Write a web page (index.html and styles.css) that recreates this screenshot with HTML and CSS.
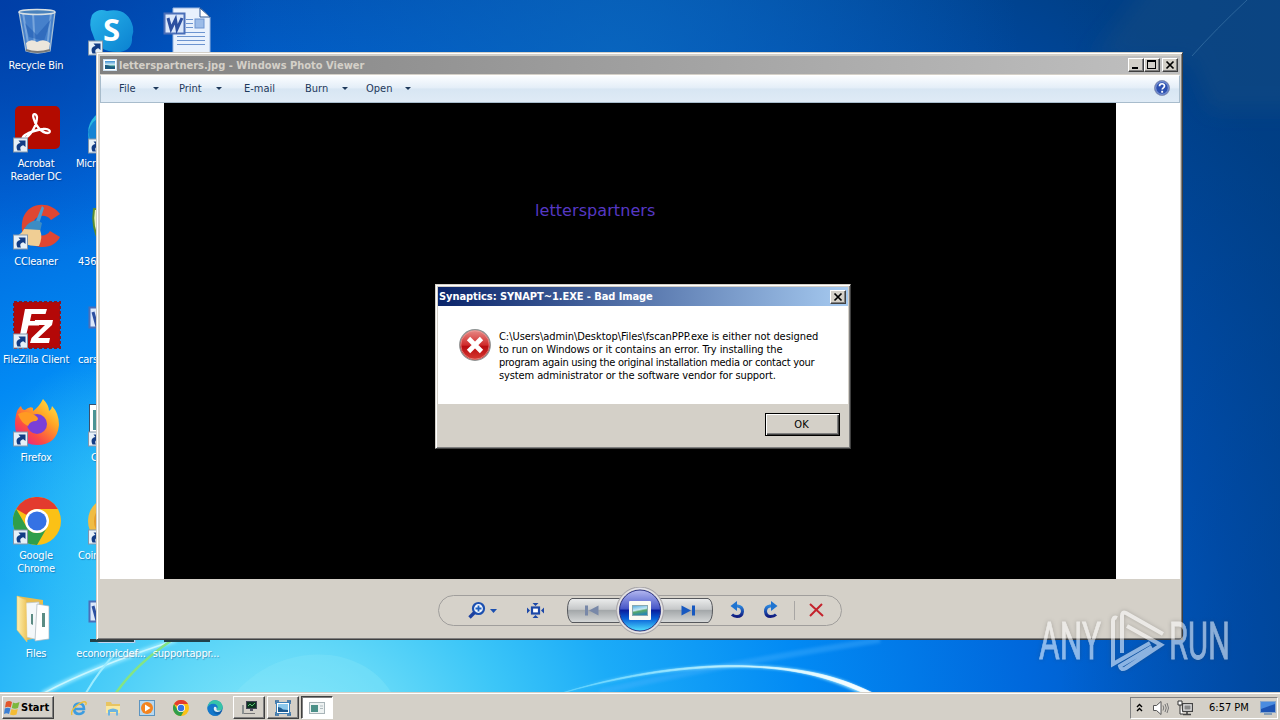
FILE: index.html
```html
<!DOCTYPE html>
<html>
    <head>
        <meta charset="UTF-8">
        <title>Desktop</title>
        <link rel="stylesheet" href="styles.css">
    </head>
    <body>
        <!-- shared icons -->
        <svg class="defs" width="0" height="0">
            <defs>
                <linearGradient id="gSky" x1="0" y1="0" x2="1" y2="1">
                    <stop offset="0" stop-color="#28b4ea"/><stop offset="1" stop-color="#0a80d0"/>
                </linearGradient>
                <linearGradient id="gFox" x1="1" y1="0" x2="0.2" y2="1">
                    <stop offset="0" stop-color="#fff04a"/><stop offset="0.4" stop-color="#ffa526"/><stop offset="0.75" stop-color="#fb4a45"/><stop offset="1" stop-color="#e5228c"/>
                </linearGradient>
                <linearGradient id="gFolder" x1="0" y1="0" x2="1" y2="0">
                    <stop offset="0" stop-color="#fdf0b0"/><stop offset="1" stop-color="#eec55c"/>
                </linearGradient>
                <linearGradient id="gEdge" x1="0" y1="0" x2="1" y2="1">
                    <stop offset="0" stop-color="#1598d8"/><stop offset="1" stop-color="#0c4da0"/>
                </linearGradient>
                <linearGradient id="gPic" x1="0" y1="0" x2="0" y2="1">
                    <stop offset="0" stop-color="#3e8fd0"/><stop offset="0.5" stop-color="#d8f0f8"/><stop offset="0.6" stop-color="#3c9888"/><stop offset="1" stop-color="#1870a0"/>
                </linearGradient>
            </defs>
            <symbol id="arrow" viewBox="0 0 15 15">
                <rect x="0.5" y="0.5" width="14" height="14" fill="#e6f0f8" stroke="#8296ac"/>
                <path d="M4.5 13 C2.5 8.5 4 6 7.5 5.5 L5.5 3 H12.5 V9.5 L10.3 7.8 C7.5 8.5 6.5 10 8 13 Z" fill="#123c84"/>
            </symbol>
            <symbol id="word" viewBox="0 0 48 48">
                <path d="M10 1 H37 L47 10 V48 H10 Z" fill="#e8f1fd" stroke="#9ab6de"/>
                <path d="M37 1 V10 H47 Z" fill="#fff" stroke="#2c5490"/>
                <path d="M23 12.500 H30 M23 16.500 H30 M23 20.500 H30 M14 25.500 H42 M14 29.500 H42 M14 33.500 H42 M14 37.500 H42" stroke="#6c94d0"/>
                <rect x="32" y="12" width="9" height="9" fill="#9cbce8" stroke="#6c94d0"/>
                <rect x="1.500" y="6.500" width="20" height="20" fill="#dbe7fa" stroke="#4a6fb8" stroke-width="2"/>
                <path d="M5 11 L8 22 L12.500 12.500 L14 22 L19 11" fill="none" stroke="#2c4fa0" stroke-width="3"/>
            </symbol>
            <symbol id="chrome" viewBox="0 0 48 48">
                <circle cx="24" cy="24" r="24" fill="#fbc116"/>
                <path d="M3.2 12 A24 24 0 0 1 44.800 12 H24 A12 12 0 0 0 13.600 18 Z" fill="#e33b2e"/>
                <path d="M3.200 12 A24 24 0 0 0 24 48 L34.400 30 A12 12 0 0 1 13.600 30 Z" fill="#2f9e4b"/>
                <circle cx="24" cy="24" r="12" fill="#fff"/>
                <circle cx="24" cy="24" r="9.600" fill="#3572e4"/>
            </symbol>
            <symbol id="edge" viewBox="0 0 24 24">
                <circle cx="12" cy="12" r="11.500" fill="url(#gEdge)"/>
                <path d="M1 11 C2 3 8 0.500 12 0.500 C19 0.500 24 6 23.500 12 C23 16 17 17 14.500 15 C16 12 14 8 9.500 8 C5 8 2 9.500 1 11Z" fill="#36c4a8"/>
                <path d="M1 11 C2 8 5 5.500 9.500 5.500 C14 5.500 17 9 16 13 C15 11 13.500 9.500 11 10 C7 11 7 18 13 21 C16 22.500 19 21.500 21 19.500 C17 25.500 7 25 3 19 C1.500 17 .5 14 1 11Z" fill="#1478cc"/>
                <path d="M11 10.500 C13 9.500 15 11 14.500 14.500 C15.500 16 19 16.500 22 15 C19 19 12 19 10.500 15 C10 13 10 11.500 11 10.500Z" fill="#e4f0f6"/>
            </symbol>
            <symbol id="photo" viewBox="0 0 14 12">
                <rect x="0.500" y="0.500" width="13" height="11" fill="#fff" stroke="#cfe0ee"/>
                <rect x="2" y="2" width="10" height="8" fill="url(#gPic)"/>
                <path d="M2 10 V6 C5 5.500 7 8 12 7.500 V10Z" fill="#1d5a80"/>
            </symbol>
        </svg>

        <main class="desktop">
            <svg class="wallpaper" width="1280" height="692" viewBox="0 0 1280 692">
                <defs>
                    <radialGradient id="sky" gradientUnits="userSpaceOnUse" cx="0" cy="0" r="1" gradientTransform="translate(280 740) scale(1250 975)">
                        <stop offset="0" stop-color="#8aeafa"/><stop offset="0.100" stop-color="#62d8f8"/>
                        <stop offset="0.180" stop-color="#3cc6f8"/><stop offset="0.270" stop-color="#1cacf8"/>
                        <stop offset="0.420" stop-color="#028af4"/><stop offset="0.600" stop-color="#0068dc"/>
                        <stop offset="0.780" stop-color="#0050b4"/><stop offset="1" stop-color="#004088"/>
                    </radialGradient>
                    <radialGradient id="glow" gradientUnits="userSpaceOnUse" cx="620" cy="60" r="400">
                        <stop offset="0" stop-color="#0c6cc0" stop-opacity="0.700"/><stop offset="1" stop-color="#0c6cc0" stop-opacity="0"/>
                    </radialGradient>
                    <radialGradient id="corner" gradientUnits="userSpaceOnUse" cx="0" cy="0" r="260">
                        <stop offset="0" stop-color="#003aa4" stop-opacity="0.800"/><stop offset="1" stop-color="#003aa4" stop-opacity="0"/>
                    </radialGradient>
                    <radialGradient id="cyan" gradientUnits="userSpaceOnUse" cx="130" cy="500" r="150">
                        <stop offset="0" stop-color="#3cd0f8" stop-opacity="0.700"/><stop offset="1" stop-color="#3cd0f8" stop-opacity="0"/>
                    </radialGradient>
                    <linearGradient id="night" gradientUnits="userSpaceOnUse" x1="1060" y1="0" x2="1280" y2="0">
                        <stop offset="0" stop-color="#003c80" stop-opacity="0"/><stop offset="1" stop-color="#003c80" stop-opacity="0.400"/>
                    </linearGradient>
                    <linearGradient id="arc" x1="0" x2="1">
                        <stop offset="0" stop-color="#5cd2ff"/><stop offset="0.600" stop-color="#c8f4ff"/><stop offset="1" stop-color="#fff"/>
                    </linearGradient>
                    <filter id="soft" x="-20%" y="-20%" width="140%" height="140%"><feGaussianBlur stdDeviation="1.600"/></filter>
                    <filter id="wide" x="-50%" y="-50%" width="200%" height="200%"><feGaussianBlur stdDeviation="10"/></filter>
                </defs>
                <rect width="1280" height="692" fill="url(#sky)"/>
                <rect width="1280" height="692" fill="url(#glow)"/>
                <rect width="1280" height="692" fill="url(#corner)"/>
                <rect width="1280" height="692" fill="url(#cyan)"/>
                <rect width="1280" height="692" fill="url(#night)"/>
                <path d="M1180 -60 L1090 60 H1190 L1210 110 H1340 V-60Z" fill="#1a5080" opacity="0.400" filter="url(#wide)"/>
                <path d="M1247 0 Q1215 30 1192 56" fill="none" stroke="#4c86b4" opacity="0.500"/>
                <path d="M236 692 C280 642 360 642 391 692 Z" fill="#8ce8f8" opacity="0.300"/>
                <path d="M42 694 Q90 668 176 640" fill="none" stroke="#8ce6ff" stroke-width="5" filter="url(#soft)"/>
                <path d="M44 693 Q90 668 176 640" fill="none" stroke="#c8f6ff" stroke-width="1.500"/>
                <path d="M86 693 Q98 672 118 650" fill="none" stroke="#9cecff" stroke-width="2"/>
                <path d="M116 693 Q135 665 172 640" fill="none" stroke="#84e484" stroke-width="2.500"/>
                <path d="M600 692 Q700 668 880 640" fill="none" stroke="#50b4ff" stroke-width="6" opacity="0.350" filter="url(#soft)"/>
                <path d="M562 693 C640 668 720 662 776 667 C820 671 848 680 872 694 L862 694 C840 684 812 672 776 669 C720 664 640 670 562 693Z" fill="#aeeeff" filter="url(#soft)"/>
                <path d="M562 693 C640 669 710 663 760 666.500 C815 669 846 680 875 694 L866 694 C840 682 810 671 760 667.500 C710 664.500 640 671 562 693Z" fill="url(#arc)" stroke="url(#arc)" stroke-width="0.700"/>
            </svg>

            <div class="icons">
                <div class="icon">
                    <svg viewBox="0 0 48 48">
                        <path d="M6 4 H42 L37 44 Q24 48 13 44 Z" fill="#7fb4e6" opacity="0.550"/>
                        <path d="M10 6 L16 42 M20 6 L22 43 M38 6 L34 42" stroke="#c4def4" stroke-width="2" opacity="0.400"/>
                        <path d="M12 16 L24 28 L38 12 L31 34 L16 30Z" fill="#1c58b0" opacity="0.500"/>
                        <path d="M13 36 Q18 31 24 35 Q31 31 37 36 L36 43 Q24 47 14 43Z" fill="#ece6dc"/>
                        <path d="M6 5 L13 44 Q24 48 37 44 L42 5" fill="none" stroke="#a8c0d4" stroke-width="1.300"/>
                        <ellipse cx="24" cy="5" rx="18" ry="2.500" fill="#4a82bc" stroke="#d8e0e4" stroke-width="1.500"/>
                        <path d="M13 43 Q24 47 37 43" fill="none" stroke="#787878" stroke-width="2"/>
                    </svg>
                    <p>Recycle Bin</p>
                </div>
                <div class="icon">
                    <svg viewBox="0 0 48 48">
                        <rect width="45" height="43" rx="5" x="2" y="1" fill="#b30b00"/>
                        <path d="M12 33 C17 31 24 21 24 12 C23 8 19 8 20.500 13 C22 20 28 28 35 28 C39 27 36 23 30 24 C23 25 17 27 12 30 C8 33 10 36 12 33Z" fill="none" stroke="#fff" stroke-width="2.300"/>
                        <use href="#arrow" x="0" y="32" width="15" height="16"/>
                    </svg>
                    <p>Acrobat<br>Reader DC</p>
                </div>
                <div class="icon">
                    <svg viewBox="0 0 48 48">
                        <path d="M47 11 C38 -2 16 -2 10 15 C5 34 16 44 30 44 C38 44 44 40 47 34 L37 28 C33 35 21 34 20 24 C19 13 32 9 38 17Z" fill="#de4632"/>
                        <path d="M29 3 L31 5 L26 21 L22 20Z" fill="#4b9bd0"/>
                        <path d="M14 22 Q22 14 29 20 L27 29 L11 26Z" fill="#3c8cc4"/>
                        <path d="M11 26 L27 27 Q30 34 26 43 Q12 44 1 34 Q8 32 11 26Z" fill="#f0ce94"/>
                        <use href="#arrow" x="0" y="31" width="15" height="16"/>
                    </svg>
                    <p>CCleaner</p>
                </div>
                <div class="icon">
                    <svg viewBox="0 0 48 48">
                        <rect x="1" y="1" width="46" height="46" fill="#b40808" stroke="#8c1420" stroke-width="2" stroke-dasharray="3 2"/>
                        <path d="M12 8 H34 L32.500 13 H18.500 L17 20 H27 L26 24.500 H15.500 L12 39 H6Z" fill="#fff"/>
                        <path d="M22 19 H40 L39 24 L25 37 H37 L36 42 H17 L18.500 37 L32 24 H21Z" fill="#fff"/>
                        <use href="#arrow" x="0" y="32" width="15" height="16"/>
                    </svg>
                    <p>FileZilla Client</p>
                </div>
                <div class="icon">
                    <svg viewBox="0 0 48 48">
                        <path d="M3 16 Q4 10 8 7 Q9 11 12 11 Q17 7 20 9 L20 12 Q26 8 30 0 Q36 6 36 12 Q39 10 39 7 Q46 14 46 26 Q44 46 24 46 Q2 45 2 25 Q2 20 3 16Z" fill="url(#gFox)"/>
                        <circle cx="24" cy="25" r="10" fill="#7a3fd8"/>
                        <path d="M5 15 Q14 10 23 17 Q27 20 23 22 Q17 22 15 27 Q8 24 5 15Z" fill="#ff9a22"/>
                        <use href="#arrow" x="0" y="32" width="15" height="16"/>
                    </svg>
                    <p>Firefox</p>
                </div>
                <div class="icon">
                    <svg viewBox="0 0 48 48">
                        <use href="#chrome" width="48" height="48"/>
                        <use href="#arrow" x="0" y="32" width="15" height="16"/>
                    </svg>
                    <p>Google<br>Chrome</p>
                </div>
                <div class="icon">
                    <svg viewBox="0 0 48 48">
                        <path d="M4 1 L30 5 V42 L14 45 Z" fill="#e8bd50"/>
                        <path d="M12 8 L26 7 L26 45 L13 42Z" fill="#f4f8fa" stroke="#b8c4cc" stroke-width="0.700"/>
                        <path d="M24 9 L36 11 V44 L22 46Z" fill="#fff" stroke="#a8b4bc" stroke-width="0.700"/>
                        <path d="M18 19 L20 19 V30 L18 29Z M29 18 L32 18 V32 L29 32Z" fill="#5c8c84"/>
                        <path d="M4 1 L13 5 L14 47 L4 35Z" fill="url(#gFolder)" stroke="#e8c468" stroke-width="0.600"/>
                    </svg>
                    <p>Files</p>
                </div>

                <div class="icon">
                    <svg viewBox="0 0 48 48">
                        <path d="M4 8 Q10 1 19 4 Q40 0 45 20 Q46 25 44 30 Q45 43 32 45 Q10 46 5 28 Q0 18 4 8Z" fill="url(#gSky)"/>
                        <text class="skype" x="15" y="34">S</text>
                        <use href="#arrow" x="0" y="33" width="15" height="16"/>
                    </svg>
                    <p></p>
                </div>
                <div class="icon">
                    <svg viewBox="0 0 48 48">
                        <circle cx="24" cy="28" r="24" fill="#2ab8e0"/>
                        <path d="M0 27 Q4 14 14 12 V48 Q2 40 0 27Z" fill="#1684d4"/>
                        <use href="#arrow" x="0" y="33" width="15" height="16"/>
                    </svg>
                    <p>Microsoft Edge</p>
                </div>
                <div class="icon cut">
                    <svg viewBox="0 0 48 48"><path d="M6 6 H40 V40 H12 Q3 24 6 6Z" fill="#e8f4c0" stroke="#5c8c30" stroke-width="2"/></svg>
                    <p>436</p>
                </div>
                <div class="icon cut">
                    <svg viewBox="0 0 48 48"><use href="#word" width="48" height="48"/></svg>
                    <p>cars</p>
                </div>
                <div class="icon cut">
                    <svg viewBox="0 0 48 48">
                        <rect x="1.500" y="5.500" width="44" height="40" fill="#fff" stroke="#3a506c"/>
                        <path d="M5 11 H44 V31 H5Z" fill="#4c9494"/>
                        <use href="#arrow" x="0" y="32" width="15" height="16"/>
                    </svg>
                    <p class="far">C</p>
                </div>
                <div class="icon cut">
                    <svg viewBox="0 0 48 48">
                        <circle cx="24" cy="24" r="24" fill="#f0bc44"/><circle cx="24" cy="24" r="18" fill="#e49c2c"/>
                        <use href="#arrow" x="0" y="32" width="15" height="16"/>
                    </svg>
                    <p>Coin</p>
                </div>
                <div class="icon">
                    <svg viewBox="0 0 48 48"><use href="#word" width="48" height="48"/><rect y="44" x="2" width="44" height="3" fill="#20424c"/></svg>
                    <p>economicdef...</p>
                </div>

                <div class="icon">
                    <svg viewBox="0 0 48 48"><use href="#word" width="48" height="48"/></svg>
                    <p></p>
                </div>
                <div class="icon last">
                    <svg viewBox="0 0 48 48"><rect x="1" y="4" width="46" height="43" fill="#20424c"/></svg>
                    <p>supportappr...</p>
                </div>
            </div>

            <!-- photo viewer -->
            <section class="window viewer">
                <div class="titlebar inactive">
                    <svg class="app" viewBox="0 0 14 12"><use href="#photo"/></svg>
                    <h1>letterspartners.jpg - Windows Photo Viewer</h1>
                    <div class="winbuttons">
                        <button><svg viewBox="0 0 12 10"><path d="M2 7 H8 V9 H2Z"/></svg></button>
                        <button><svg viewBox="0 0 12 10"><path d="M1 0 H10 V9 H1Z M2 2 V8 H9 V2Z" fill-rule="evenodd"/></svg></button>
                        <button class="close"><svg viewBox="0 0 12 10"><path d="M2.500 1.500 L9.500 8.500 M9.500 1.500 L2.500 8.500" stroke="#000" stroke-width="1.700"/></svg></button>
                    </div>
                </div>
                <nav class="menu">
                    <span class="file">File</span><i></i>
                    <span class="print">Print</span><i></i>
                    <span class="email">E-mail</span>
                    <span class="burn">Burn</span><i></i>
                    <span class="open">Open</span><i></i>
                    <svg class="help" viewBox="0 0 16 16">
                        <circle cx="8" cy="8" r="7.500" fill="#2c50b0" stroke="#8a94b4"/>
                        <circle cx="8" cy="8" r="6.300" fill="none" stroke="#a8bce8" stroke-width="0.800"/>
                        <path d="M5.500 6.200 C5.500 3 10.600 3 10.500 6 C10.500 7.800 8.200 7.800 8.200 9.600" fill="none" stroke="#fff" stroke-width="1.700"/>
                        <rect x="7.200" y="10.800" width="1.900" height="1.900" fill="#fff"/>
                    </svg>
                </nav>
                <div class="stage">
                    <div class="picture"><span>letterspartners</span></div>
                </div>
                <div class="controls">
                    <svg width="406" height="48" viewBox="437 587 406 48">
                        <defs>
                            <linearGradient id="steel" x1="0" y1="0" x2="0" y2="1">
                                <stop offset="0" stop-color="#eceded"/><stop offset="0.450" stop-color="#c6c8c9"/><stop offset="0.500" stop-color="#a4a8aa"/><stop offset="1" stop-color="#d6d8d8"/>
                            </linearGradient>
                            <linearGradient id="orb" x1="0" y1="0" x2="0" y2="1">
                                <stop offset="0" stop-color="#b4b8f0"/><stop offset="0.450" stop-color="#4858c8"/><stop offset="0.500" stop-color="#0820a0"/><stop offset="0.700" stop-color="#0860d8"/><stop offset="1" stop-color="#50e0ff"/>
                            </linearGradient>
                            <linearGradient id="blue" x1="0" y1="0" x2="0" y2="1">
                                <stop offset="0" stop-color="#2a84dc"/><stop offset="1" stop-color="#101c80"/>
                            </linearGradient>
                            <linearGradient id="view" x1="0" y1="0" x2="0.3" y2="1">
                                <stop offset="0" stop-color="#4ca8e0"/><stop offset="0.500" stop-color="#c4e8f4"/><stop offset="0.650" stop-color="#58a868"/><stop offset="1" stop-color="#2888b0"/>
                            </linearGradient>
                        </defs>
                        <rect x="438.500" y="595.500" width="403" height="30" rx="15" fill="#d6d2ca" stroke="#a09e9c"/>
                        <path d="M572 598.500 H708 Q712.500 600 712.500 610 Q712.500 620 708 622.500 H572 Q567.500 620 567.500 610 Q567.500 600 572 598.500Z" fill="url(#steel)" stroke="#56585c"/>
                        <circle cx="640" cy="610.500" r="23.500" fill="#d6d2ca" stroke="#a4a2a8"/>
                        <circle cx="640" cy="610.500" r="20.500" fill="url(#orb)" stroke="#2c3484"/>
                        <circle cx="640" cy="610.500" r="22" fill="none" stroke="#e8e8f4"/>
                        <rect x="629" y="601" width="22" height="19" rx="1" fill="#fbfbf4"/>
                        <rect x="632.500" y="605.500" width="15" height="10" fill="url(#view)" stroke="#88a8b0"/>
                        <circle cx="478.500" cy="608.500" r="5.500" fill="#f0f6ff" stroke="#1c50b0" stroke-width="2.200"/>
                        <path d="M474.500 612.500 L469.500 617.500" stroke="#1c40a0" stroke-width="3.400"/>
                        <path d="M475.500 608.500 H481.500 M478.500 605.500 V611.500" stroke="#1c60c0" stroke-width="1.800"/>
                        <path d="M490 609 H497 L493.500 613Z" fill="#1c50b0"/>
                        <rect x="532" y="607.500" width="7" height="6" fill="#fff" stroke="#1c48a8" stroke-width="2.200"/>
                        <path d="M532.500 603 H538.500 L535.500 606Z M532.500 618 H538.500 L535.500 615Z M527 607.500 V613.500 L530 610.500Z M544 607.500 V613.500 L541 610.500Z" fill="#1c48a8"/>
                        <path d="M585 605.500 H588 V615.500 H585Z M598.500 605.500 V615.500 L589 610.500Z" fill="#7888a8"/>
                        <path d="M681.500 605.500 V615.500 L691 610.500Z M692 605.500 H695 V615.500 H692Z" fill="#1658c0"/>
                        <path d="M735 606 H737.500 Q742.500 606.500 742.500 611.500 Q742 616.500 737 616.500 Q734 616.500 732 614.500" fill="none" stroke="url(#blue)" stroke-width="3"/>
                        <path d="M730.500 606 L737 601 V611Z" fill="#1f74d0"/>
                        <path d="M773 606 H770 Q765.500 606.500 765.500 611.500 Q766 616.500 770.500 616.500 Q774 616.500 776 614.500" fill="none" stroke="url(#blue)" stroke-width="3"/>
                        <path d="M777.500 606 L771 601 V611Z" fill="#1f74d0"/>
                        <path d="M794.500 601 V620" stroke="#a8a6a4"/>
                        <path d="M810 604 L823 616 M822 604 L810 616" stroke="#c4222c" stroke-width="2"/>
                    </svg>
                </div>
            </section>

            <!-- error message -->
            <section class="window dialog">
                <div class="titlebar">
                    <h1>Synaptics: SYNAPT~1.EXE - Bad Image</h1>
                    <div class="winbuttons">
                        <button class="close"><svg viewBox="0 0 12 10"><path d="M2.500 1.500 L9.500 8.500 M9.500 1.500 L2.500 8.500" stroke="#000" stroke-width="1.700"/></svg></button>
                    </div>
                </div>
                <div class="message">
                    <svg viewBox="0 0 32 32">
                        <defs>
                            <linearGradient id="red" x1="0" y1="0" x2="0" y2="1">
                                <stop offset="0" stop-color="#e88c88"/><stop offset="0.500" stop-color="#d02c2c"/><stop offset="0.550" stop-color="#b80c10"/><stop offset="1" stop-color="#d83c34"/>
                            </linearGradient>
                        </defs>
                        <circle cx="16" cy="16" r="15.300" fill="url(#red)" stroke="#8e9494" stroke-width="1.200"/>
                        <circle cx="16" cy="16" r="14.200" fill="none" stroke="#eca8a4" stroke-width="0.600"/>
                        <path d="M9.500 9.500 L22.500 22.500 M22.500 9.500 L9.500 22.500" stroke="#fff" stroke-width="4.700"/>
                    </svg>
                    <p>
                        C:\Users\admin\Desktop\Files\fscanPPP.exe is either not designed<br>
                        <span class="tight">to run on Windows or it contains an error. Try installing the</span><br>
                        <span class="tighter">program again using the original installation media or contact your</span><br>
                        <span class="tight">system administrator or the software vendor for support.</span>
                    </p>
                </div>
                <div class="answer">
                    <button>OK</button>
                </div>
            </section>

            <svg class="watermark" width="210" height="76" viewBox="1030 602 210 76">
                <text x="1039" y="659" textLength="62" lengthAdjust="spacingAndGlyphs">ANY</text>
                <text x="1169" y="659" textLength="61" lengthAdjust="spacingAndGlyphs">RUN</text>
                <path d="M1117 618 Q1113 616 1113 622 V664 L1150 643 M1122 653 V616 Q1122 611 1126 613 L1163 634 M1127 626 L1161 645 L1126 668 Q1121 671 1120 666 L1152 647"/>
            </svg>
        </main>

        <footer class="taskbar">
            <button class="start">
                <svg viewBox="0 0 16 16">
                    <path d="M2 2 Q5 0 8 2 L6.800 7.500 Q4 6 1 7.500Z" fill="#e2572c"/>
                    <path d="M9 2.500 Q12 4 15.500 2 L14 8 Q11 9.500 7.800 8Z" fill="#7cb83c"/>
                    <path d="M.8 8.500 Q4 7 6.500 8.500 L5 14 Q2.500 12.500 0 14Z" fill="#3c80d4"/>
                    <path d="M7.500 9 Q10.500 10.500 13.800 9 L12.500 14.500 Q9.500 16 6 14.500Z" fill="#f4bc34"/>
                </svg>
                Start
            </button>
            <div class="quick">
                <svg viewBox="0 0 16 16">
                    <path d="M3 9 H13 Q13 3.500 8 3.500 Q3 3.500 3 9 Q3.500 14 8 14 Q11.500 14 13 11" fill="none" stroke="#3c9ce0" stroke-width="2.600"/>
                    <path d="M1 15 Q-1 11 6 5.500 Q13 0 15 2.500 Q15.500 3.500 14.500 5" fill="none" stroke="#ecc03c" stroke-width="1.400"/>
                </svg>
                <svg viewBox="0 0 16 16">
                    <path d="M1 2 H6 L7 4 H15 V13 H1Z" fill="#e8c460"/><path d="M1 6 H15 V13 H1Z" fill="#fbe8a0"/>
                    <path d="M3 15.500 V10 Q8 7 13 10 V15.500 H11 V12 H5 V15.500Z" fill="#6cb4e0"/>
                </svg>
                <svg viewBox="0 0 16 16">
                    <rect x="0.500" y="0.500" width="15" height="15" fill="#b8d8f0" stroke="#5c94c0"/>
                    <circle cx="8" cy="8" r="6" fill="#f48420"/><path d="M6 4.500 L11.500 8 L6 11.500Z" fill="#fff"/>
                </svg>
                <svg viewBox="0 0 48 48"><use href="#chrome"/></svg>
                <svg viewBox="0 0 24 24"><use href="#edge"/></svg>
            </div>
            <div class="tasks">
                <button>
                    <svg viewBox="0 0 16 16">
                        <rect x="5.500" y="1.500" width="10" height="7" fill="#0c3420" stroke="#445"/><path d="M7 6 L9 4 L11 6 L14 3" fill="none" stroke="#58c070"/>
                        <path d="M9 9 H12 V11 H9Z" fill="#556"/><rect x="1" y="5" width="2" height="9" fill="#8a9090"/><path d="M3 13.500 H14" stroke="#777"/>
                    </svg>
                </button>
                <button>
                    <svg viewBox="0 0 16 16">
                        <rect x="1.500" y="2.500" width="13" height="11" fill="#fff" stroke="#3c80b8"/><rect x="3" y="4" width="10" height="8" fill="#8cc8ec"/><path d="M3 12 V7 Q6 7 8 9.500 L13 10 V12Z" fill="#1d5a90"/>
                        <path d="M0 1 H4 M0 1 V4 M16 1 H12 M16 1 V4 M0 15 H4 M0 15 V12 M16 15 H12 M16 15 V12" stroke="#2c68a0" stroke-width="1.500"/>
                    </svg>
                </button>
                <button class="pressed">
                    <svg viewBox="0 0 16 16">
                        <rect x="0.500" y="2.500" width="15" height="11" fill="#eef2f2" stroke="#a8b4b8"/><rect x="2" y="5" width="7" height="7" fill="#4c9088"/><path d="M11 6 H14 M11 8.500 H14" stroke="#b0bcc0"/>
                    </svg>
                </button>
            </div>
            <div class="tray">
                <svg class="chev" viewBox="0 0 7 9"><path d="M1 4 L3.500 1.500 L6 4 M1 8 L3.500 5.500 L6 8" fill="none" stroke="#000" stroke-width="1.400"/></svg>
                <svg class="sound" viewBox="0 0 16 16"><path d="M.5 5.500 H3.500 L8 1.500 V14.500 L3.500 10.500 H.5Z" fill="#fff" stroke="#555"/><path d="M10 5.500 Q11.500 8 10 10.500 M12 4 Q14.500 8 12 12 M14 3 Q17 8 14 13" fill="none" stroke="#777"/></svg>
                <svg class="net" viewBox="0 0 16 16"><rect x="5.500" y="3.500" width="10" height="8" fill="#aaa" stroke="#444"/><rect x="7" y="5" width="7" height="5" fill="#888" stroke="#fff" stroke-width="0.700"/><path d="M6 14.500 H14 M10 12 V14" stroke="#444" stroke-width="1.600"/><path d="M1 1 H5 V5 H1Z M3 5 V14 H6" fill="#fff" stroke="#333"/></svg>
                <time>6:57 PM</time>
                <svg class="show" viewBox="0 0 16 14"><rect x="0.500" y="0.500" width="15" height="11" fill="#1c54b4" stroke="#8aa8cc"/><path d="M1 8 L15 3 V1 H1Z" fill="#4a8ce0"/><path d="M4 13 H12" stroke="#6a8cb0" stroke-width="1.500"/></svg>
            </div>
        </footer>
    </body>
</html>
```
FILE: styles.css
```css
*{
    box-sizing: border-box;
}
body{
    margin: 0;
    width: 1280px;
    height: 720px;
    overflow: hidden;
    display: flex;
    flex-direction: column;
    font-family: "DejaVu Sans Condensed", "DejaVu Sans", sans-serif;
    font-size: 11px;
    line-height: 13px;
}
h1, p{
    margin: 0;
    font-size: 11px;
}
button{
    font: inherit;
    padding: 0;
    color: #000;
    background: #d4d0c8;
    border: 1px solid;
    border-color: #fff #404040 #404040 #fff;
    box-shadow: inset -1px -1px 0 #808080;
}
.defs{
    position: absolute;
}
.desktop{
    position: relative;
    height: 692px;
}
.wallpaper{
    display: block;
}

/* desktop icons */
.icons{
    position: absolute;
    top: 0;
    left: -1px;
    display: grid;
    grid-auto-flow: column;
    grid-template-rows: repeat(7, 98px);
    grid-auto-columns: 75px;
}
.icon{
    padding-top: 7px;
    color: #fff;
    text-align: center;
    letter-spacing: -0.2px;
}
.icon svg{
    display: block;
    width: 48px;
    height: 48px;
    margin: 0 0 4px 14px;
    overflow: visible;
}
.icon p{
    margin-left: -1px;
    white-space: nowrap;
    text-shadow: 1px 1px 1px rgba(0, 30, 80, 0.35);
}
.cut p{
    text-align: left;
    padding-left: 5px;
}
.cut .far{
    padding-left: 18px;
}
.last{
    grid-row: 7;
}
.skype{
    font: bold 31px "Open Sans", sans-serif;
    fill: #fff;
}

/* windows */
.window{
    position: absolute;
    display: flex;
    flex-direction: column;
    background: #d4d0c8;
    border: 1px solid;
    border-color: #d4d0c8 #404040 #404040 #d4d0c8;
    box-shadow: inset 1px 1px 0 #fff, inset -1px -1px 0 #808080;
}
.titlebar{
    height: 18px;
    display: flex;
    align-items: center;
    padding: 0 2px 0 1px;
    color: #fff;
    background: linear-gradient(to right, #0a246a, #a6caf0);
}
.titlebar h1{
    flex: 1;
    white-space: nowrap;
    letter-spacing: -0.07px;
}
.inactive{
    color: #d4d0c8;
    background: linear-gradient(to right, #808080, #c0c0c0);
}
.inactive h1{
    letter-spacing: 0;
}
.winbuttons{
    display: flex;
}
.winbuttons button{
    width: 16px;
    height: 14px;
}
.winbuttons svg{
    display: block;
    width: 12px;
    height: 10px;
    margin-left: 1px;
}
.winbuttons .close{
    margin-left: 2px;
}
.viewer{
    left: 96px;
    top: 52px;
    width: 1087px;
    height: 588px;
    padding: 3px 2px 3px 3px;
}
.viewer .app{
    width: 14px;
    height: 12px;
    margin: 0 2px 0 2px;
}
.menu{
    height: 28px;
    margin-top: 1px;
    display: flex;
    align-items: center;
    padding-bottom: 2px;
    color: #1e395b;
    background: linear-gradient(to bottom, #fbfdff, #e4eef8 45%, #d8e6f3 50%, #dfebf6);
    border: 1px solid #a8bccc;
    border-top-color: #fff;
}
.menu i{
    border: 3px solid transparent;
    border-top-color: #1e395b;
    border-bottom: 0;
}
.file{
    width: 52px;
    padding-left: 18px;
}
.print{
    width: 57px;
    padding-left: 20px;
}
.email{
    width: 83px;
    padding-left: 22px;
}
.burn{
    width: 37px;
}
.open{
    width: 57px;
    padding-left: 18px;
}
.help{
    width: 16px;
    height: 16px;
    margin: 0 9px 0 auto;
}
.stage{
    height: 476px;
    background: #fff;
    padding: 0 64px;
}
.picture{
    height: 476px;
    background: #000;
    color: #5638c4;
    font: 16px/20px "DejaVu Sans", sans-serif;
    letter-spacing: 0.07px;
    padding: 98px 0 0 371px;
}
.controls{
    flex: 1;
    display: flex;
    justify-content: center;
    padding-top: 8px;
}
.dialog{
    left: 435px;
    top: 284px;
    width: 416px;
    height: 165px;
    padding: 2px;
}
.dialog .titlebar{
    height: 19px;
}
.message{
    height: 98px;
    display: flex;
    gap: 8px;
    padding: 23px 0 0 21px;
    background: #fff;
}
.message svg{
    width: 32px;
    height: 32px;
}
.message p{
    white-space: nowrap;
    padding-top: 1px;
    letter-spacing: -0.05px;
}
.message .tight{
    letter-spacing: -0.11px;
}
.message .tighter{
    letter-spacing: -0.26px;
}
.answer{
    display: flex;
    justify-content: flex-end;
    padding: 9px 8px;
}
.answer button{
    width: 75px;
    height: 23px;
    padding-right: 2px;
    border-color: #000;
    box-shadow: inset 1px 1px 0 #fff, inset -1px -1px 0 #404040, inset -2px -2px 0 #808080;
}
.watermark{
    position: absolute;
    left: 1030px;
    top: 602px;
    opacity: 0.55;
    filter: drop-shadow(0 0 2px rgba(60, 60, 60, 0.5));
}
.watermark text{
    font: 52px Roboto, sans-serif;
    fill: #fff;
    stroke: #fff;
    stroke-width: 0.8px;
}
.watermark path{
    fill: none;
    stroke: #fff;
    stroke-width: 4;
}

/* taskbar */
.taskbar{
    height: 28px;
    display: flex;
    align-items: center;
    padding: 3px 2px 1px;
    background: #d4d0c8;
    border-top: 1px solid #d4d0c8;
    box-shadow: inset 0 1px 0 #fff;
}
.start{
    width: 52px;
    height: 23px;
    display: flex;
    align-items: center;
    gap: 1px;
    padding-left: 1px;
    font-weight: bold;
}
.start svg{
    width: 16px;
    height: 16px;
}
.quick{
    display: flex;
    gap: 18px;
    margin-left: 17px;
}
.quick svg{
    width: 16px;
    height: 16px;
}
.tasks{
    display: flex;
    gap: 2px;
    margin-left: 10px;
}
.tasks button{
    width: 32px;
    height: 23px;
}
.tasks svg{
    display: block;
    width: 16px;
    height: 16px;
    margin: 0 auto;
}
.tasks .pressed{
    background: #fff;
    border-color: #404040 #fff #fff #404040;
    box-shadow: inset 1px 1px 0 #808080;
}
.tray{
    width: 148px;
    height: 22px;
    margin-left: auto;
    display: flex;
    align-items: center;
    padding-left: 5px;
    border: 1px solid;
    border-color: #808080 #fff #fff #808080;
}
.chev{
    width: 7px;
    height: 9px;
}
.sound{
    width: 16px;
    height: 16px;
    margin-left: 10px;
}
.net{
    width: 16px;
    height: 16px;
    margin-left: 8px;
}
.tray time{
    margin-left: 16px;
    white-space: nowrap;
}
.show{
    width: 16px;
    height: 14px;
    margin: 0 1px 0 auto;
}
```
